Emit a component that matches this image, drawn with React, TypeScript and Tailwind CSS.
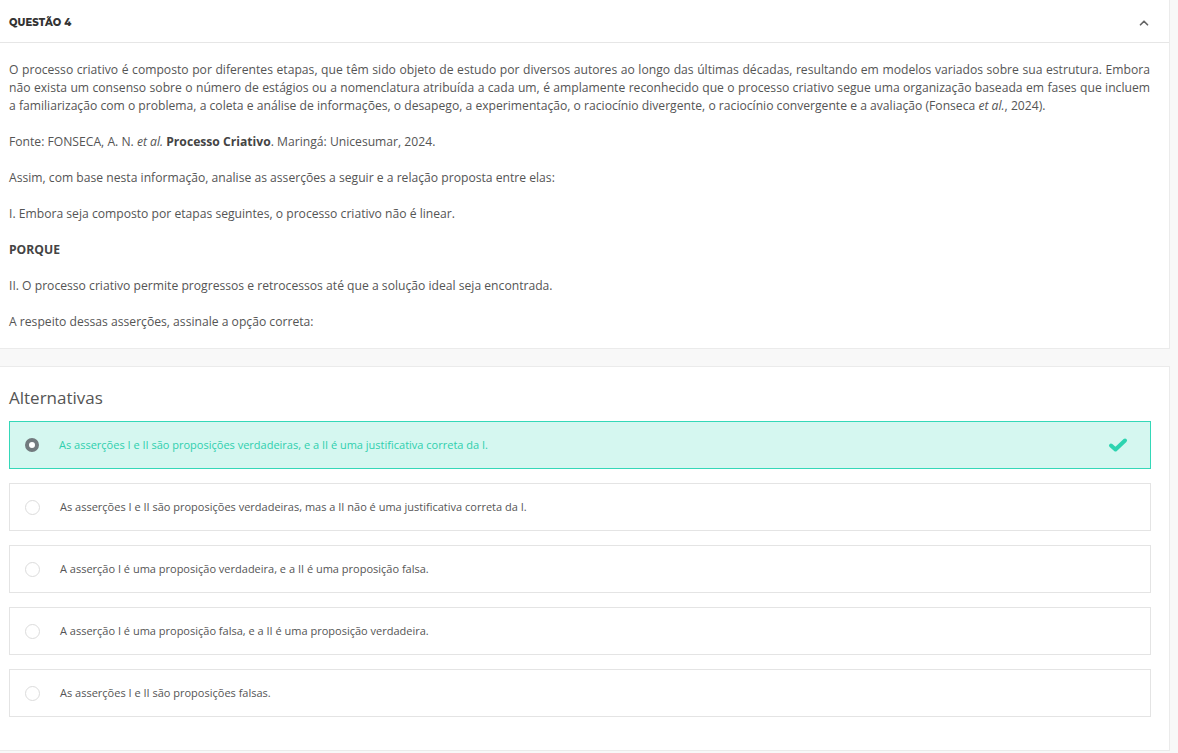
import { ChevronUp } from 'lucide-react';

type Option = {
  id: string;
  text: string;
};

const options: Option[] = [
  { id: 'a', text: 'As asserções I e II são proposições verdadeiras, e a II é uma justificativa correta da I.' },
  { id: 'b', text: 'As asserções I e II são proposições verdadeiras, mas a II não é uma justificativa correta da I.' },
  { id: 'c', text: 'A asserção I é uma proposição verdadeira, e a II é uma proposição falsa.' },
  { id: 'd', text: 'A asserção I é uma proposição falsa, e a II é uma proposição verdadeira.' },
  { id: 'e', text: 'As asserções I e II são proposições falsas.' },
];

const selectedId = 'a';

function CheckIcon() {
  return (
    <svg width="20" height="16" viewBox="0 0 20 16" fill="none">
      <path d="M3 8.5 L7.5 12.5 L17 3.5" stroke="#2dd4b0" strokeWidth="4" strokeLinecap="round" strokeLinejoin="round" />
    </svg>
  );
}

export default function App() {
  return (
    <main
      className="min-h-screen w-full bg-[#f8f8f8] text-[#555]"
      style={{ fontFamily: '"Open Sans", "Segoe UI", Arial, sans-serif' }}
    >
      <div className="w-[1170px]">
        <section className="bg-white border-r border-b border-[#ebebeb]">
          <header className="h-[43px] pt-[3px] flex items-center justify-between pl-[9px] pr-[18px] border-b border-[#e6e6e6]">
            <h2
              className="text-[10px] font-extrabold tracking-[0.01em] text-[#333]"
              style={{ fontFamily: 'Montserrat, "Open Sans", Arial, sans-serif' }}
            >
              QUESTÃO 4
            </h2>
            <ChevronUp size={14} strokeWidth={3} className="text-[#666]" />
          </header>

          <div className="pl-[9px] pr-[19px] pt-[18px] pb-[17px] text-[12.15px] leading-[18px] space-y-[18px]">
            <p className="text-justify">
              O processo criativo é composto por diferentes etapas, que têm sido objeto de estudo por diversos autores ao longo das últimas décadas, resultando em modelos variados sobre sua estrutura. Embora não exista um consenso sobre o número de estágios ou a nomenclatura atribuída a cada um, é amplamente reconhecido que o processo criativo segue uma organização baseada em fases que incluem a familiarização com o problema, a coleta e análise de informações, o desapego, a experimentação, o raciocínio divergente, o raciocínio convergente e a avaliação (Fonseca <em>et al.</em>, 2024).
            </p>
            <p>
              Fonte: FONSECA, A. N. <em>et al.</em> <strong className="text-[#444]">Processo Criativo</strong>. Maringá: Unicesumar, 2024.
            </p>
            <p>Assim, com base nesta informação, analise as asserções a seguir e a relação proposta entre elas:</p>
            <p>I. Embora seja composto por etapas seguintes, o processo criativo não é linear.</p>
            <p><strong className="text-[#444]">PORQUE</strong></p>
            <p>II. O processo criativo permite progressos e retrocessos até que a solução ideal seja encontrada.</p>
            <p>A respeito dessas asserções, assinale a opção correta:</p>
          </div>
        </section>

        <section className="mt-[17px] bg-white border-t border-r border-b border-[#ebebeb] pl-[9px] pr-[18px] pt-[18px] pb-[33px]">
          <h3 className="text-[17px] leading-[26px] text-[#555] mb-[10px]">Alternativas</h3>
          <div className="flex flex-col gap-[14px]">
            {options.map((o) => {
              const selected = o.id === selectedId;
              return (
                <label
                  key={o.id}
                  className={
                    selected
                      ? 'h-[48px] flex items-center border border-[#34d8b8] bg-[#d5f7f0] pl-[15px] pr-[22px]'
                      : 'h-[48px] flex items-center border border-[#e4e4e4] bg-white pl-[15px] pr-[22px]'
                  }
                >
                  {selected ? (
                    <span className="w-[14px] h-[14px] rounded-full border-[4px] border-[#727a7e] bg-white shrink-0" />
                  ) : (
                    <span className="w-[15px] h-[15px] rounded-full border border-[#dcdcdc] bg-white shrink-0" />
                  )}
                  <span
                    className={
                      selected
                        ? 'ml-[20px] flex-1 text-[11px] text-[#2fcfae]'
                        : 'ml-[20px] flex-1 text-[11px] text-[#555]'
                    }
                  >
                    {o.text}
                  </span>
                  {selected && <CheckIcon />}
                </label>
              );
            })}
          </div>
        </section>
      </div>
    </main>
  );
}
